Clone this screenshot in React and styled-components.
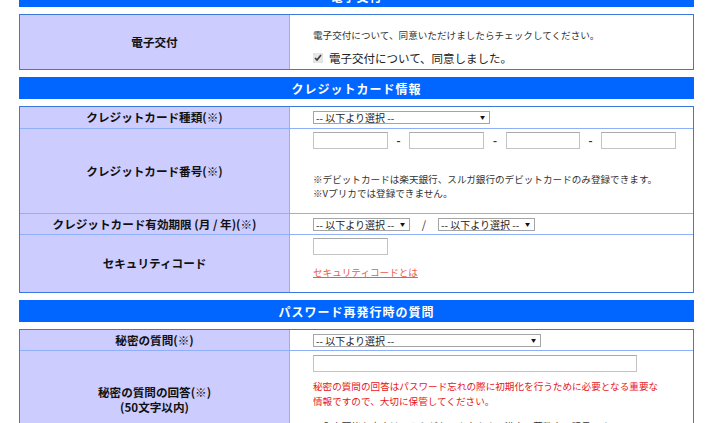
import React from "react";
import styled, { createGlobalStyle } from "styled-components";

const Global = createGlobalStyle`
  html, body { margin: 0; padding: 0; overflow: hidden; background: #fff; }
  body { font-family: "Noto Sans CJK JP", "Noto Sans", sans-serif; color: #333; }
  * { box-sizing: border-box; }
`;

const Page = styled.div`
  width: 720px;
  padding: 0 26px 0 19px;
`;

const SectionHeader = styled.div`
  height: 22px;
  margin-top: ${p => (p.$clipped ? "-15px" : "0")};
  margin-bottom: 7px;
  background: #0066ff;
  color: #fff;
  font-size: 12px;
  font-weight: bold;
  letter-spacing: 1px;
  display: flex;
  align-items: center;
  justify-content: center;
`;

const Table = styled.div`
  display: grid;
  grid-template-columns: 270px 1fr;
  border: 1px solid #3c78dc;
  margin-bottom: 7px;
`;

const Label = styled.div`
  background: #ccccff;
  border-right: 1px solid #8fb0f8;
  border-bottom: ${p => (p.$last ? "none" : "1px solid #8fb0f8")};
  display: flex;
  align-items: center;
  justify-content: center;
  text-align: center;
  color: #111;
  font-size: 11.6px;
  font-weight: bold;
  line-height: 15px;
`;

const Value = styled.div`
  min-height: ${p => p.$h}px;
  border-bottom: ${p => (p.$last ? "none" : "1px solid #8fb0f8")};
  padding: ${p => p.$pad || "0"};
  padding-left: 23px;
  display: flex;
  flex-direction: column;
  justify-content: ${p => (p.$top ? "flex-start" : "center")};
  align-items: flex-start;
`;

const Small = styled.p`
  margin: ${p => p.$m || "0"};
  font-size: 9.6px;
  line-height: ${p => p.$lh || 14}px;
  color: ${p => p.$color || "#333"};
`;

const AgreeLine = styled.label`
  display: flex;
  align-items: center;
  gap: 6px;
  margin-top: 6px;
  font-size: 11.5px;
  line-height: 18px;
  color: #222;
`;

const Check = styled.input`
  width: 10px;
  height: 10px;
  margin: 0;
  accent-color: #e6e6e6;
`;

const SelectWrap = styled.div`
  position: relative;
  width: ${p => p.$w}px;
  height: 13px;
`;

const Select = styled.select`
  appearance: none;
  display: block;
  width: 100%;
  height: 13px;
  margin: 0;
  padding: 0 2px;
  border: 1px solid #a5a5a5;
  border-radius: 0;
  background: #fff;
  color: #222;
  font-family: inherit;
  font-size: 10px;
  line-height: 11px;
`;

const Arrow = styled.span`
  position: absolute;
  right: 5px;
  top: 1px;
  font-size: 5px;
  line-height: 10px;
  color: #111;
  pointer-events: none;
`;

const Field = styled.input`
  display: block;
  width: ${p => p.$w}px;
  height: 17px;
  margin: 0;
  padding: 0 3px;
  border: 1px solid #c4c4c4;
  border-top-color: #a8a8a8;
  background: #fff;
`;

const InlineRow = styled.div`
  display: flex;
  align-items: center;
`;

const Sep = styled.span`
  width: ${p => p.$w}px;
  text-align: center;
  font-size: 11px;
  font-weight: ${p => (p.$thin ? "normal" : "bold")};
  line-height: 13px;
  color: #333;
`;

const HelpLink = styled.a`
  margin-top: 10px;
  font-size: 9.6px;
  line-height: 14px;
  color: #ee5a46;
  text-decoration: underline;
`;

function Dropdown({ w }) {
  return (
    <SelectWrap $w={w}>
      <Select defaultValue="">
        <option value="">-- 以下より選択 --</option>
      </Select>
      <Arrow>▼</Arrow>
    </SelectWrap>
  );
}

export default function App() {
  return (
    <Page>
      <Global />
      <SectionHeader $clipped>電子交付</SectionHeader>
      <Table>
        <Label $last>電子交付</Label>
        <Value $last $h={54} $top $pad="12px 0 0 0">
          <Small $lh={16}>
            電子交付について、同意いただけましたらチェックしてください。
          </Small>
          <AgreeLine>
            <Check type="checkbox" defaultChecked />
            電子交付について、同意しました。
          </AgreeLine>
        </Value>
      </Table>

      <SectionHeader>クレジットカード情報</SectionHeader>
      <Table>
        <Label>クレジットカード種類(※)</Label>
        <Value $h={22}>
          <Dropdown w={177} />
        </Value>

        <Label>クレジットカード番号(※)</Label>
        <Value $h={85} $top $pad="3px 0 0 0">
          <InlineRow>
            <Field $w={75} />
            <Sep $w={21}>-</Sep>
            <Field $w={75} />
            <Sep $w={22}>-</Sep>
            <Field $w={74} />
            <Sep $w={21}>-</Sep>
            <Field $w={75} />
          </InlineRow>
          <Small $m="23px 0 0 0">
            ※デビットカードは楽天銀行、スルガ銀行のデビットカードのみ登録できます。
            <br />
            ※Vプリカでは登録できません。
          </Small>
        </Value>

        <Label>クレジットカード有効期限 (月 / 年)(※)</Label>
        <Value $h={21}>
          <InlineRow>
            <Dropdown w={97} />
            <Sep $w={28} $thin>/</Sep>
            <Dropdown w={97} />
          </InlineRow>
        </Value>

        <Label $last>セキュリティコード</Label>
        <Value $last $h={57} $top $pad="3px 0 0 0">
          <Field $w={75} />
          <HelpLink href="#">セキュリティコードとは</HelpLink>
        </Value>
      </Table>

      <SectionHeader>パスワード再発行時の質問</SectionHeader>
      <Table>
        <Label>秘密の質問(※)</Label>
        <Value $h={21}>
          <Dropdown w={228} />
        </Value>

        <Label $last>
          秘密の質問の回答(※)
          <br />
          (50文字以内)
        </Label>
        <Value $last $h={98} $top $pad="4px 0 0 0">
          <Field $w={324} />
          <Small $lh={15} $m="7px 0 0 0" $color="#e8141e">
            秘密の質問の回答はパスワード忘れの際に初期化を行うために必要となる重要な
            <br />
            情報ですので、大切に保管してください。
          </Small>
          <Small $lh={15} $m="10px 0 0 0">
            ※入力可能な文字は、ひらがな、カタカナ、漢字、英数字、記号です。
            <br />
            ※機種依存文字は使用できません。
          </Small>
        </Value>
      </Table>
    </Page>
  );
}
